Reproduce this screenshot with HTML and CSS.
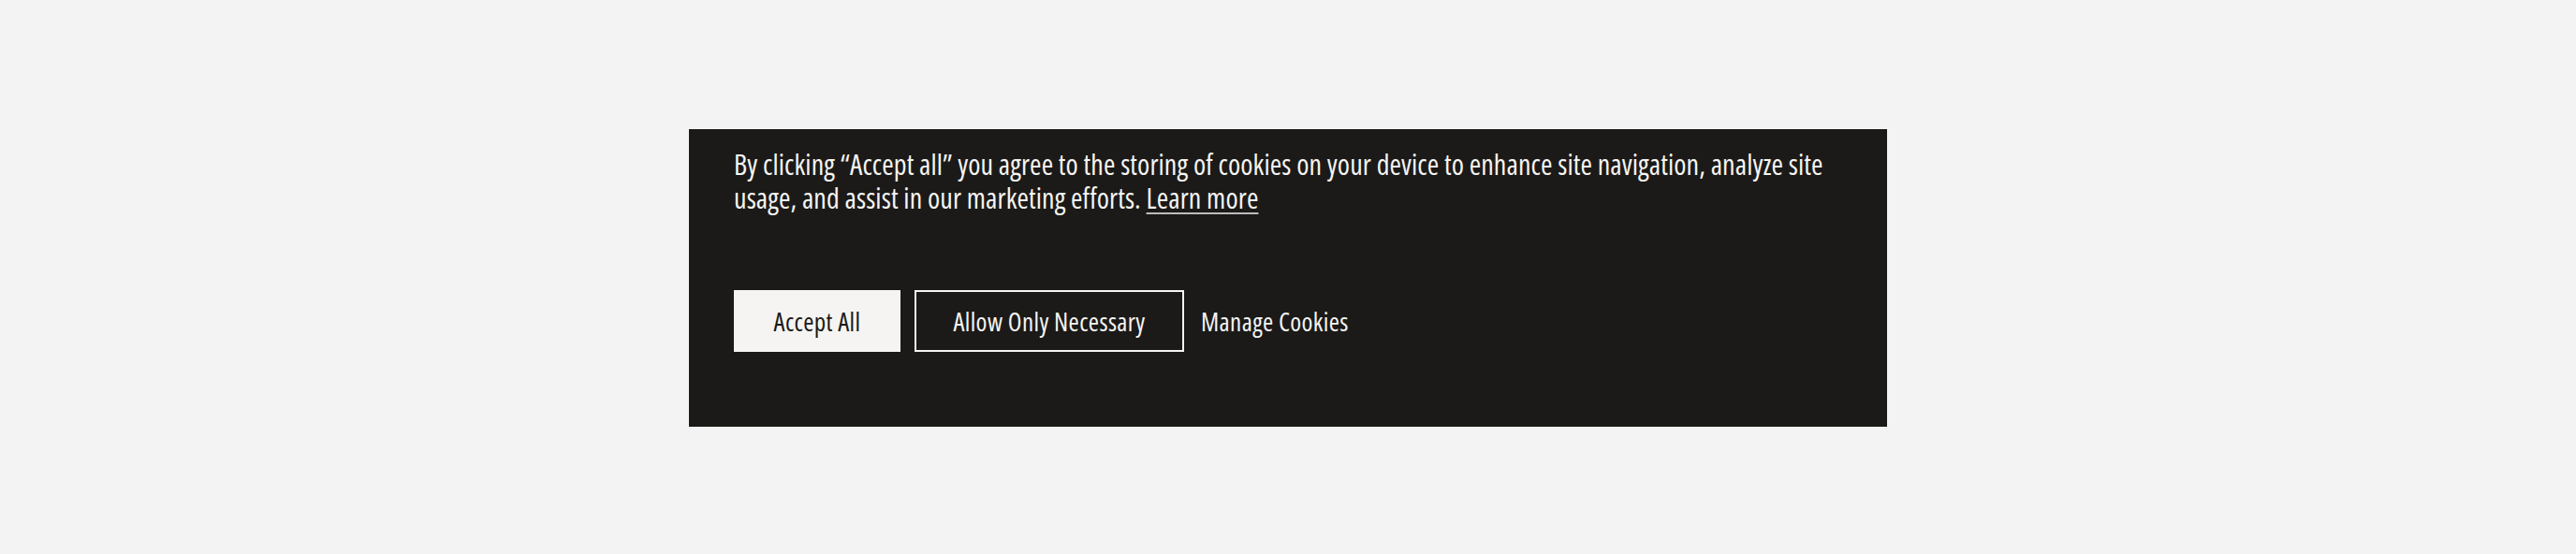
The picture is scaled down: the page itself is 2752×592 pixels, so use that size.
FILE: index.html
```html
<!DOCTYPE html>
<html lang="en">
<head>
<meta charset="utf-8">
<title>Cookie banner</title>
<link rel="stylesheet" href="styles.css">
</head>
<body>
<section class="banner">
  <p class="banner-text">By clicking “Accept all” you agree to the storing of cookies on your device to enhance site navigation, analyze site usage, and assist in our marketing efforts. <a class="learn" href="#">Learn more</a></p>
  <div class="actions">
    <button class="btn btn-primary">Accept All</button>
    <button class="btn btn-outline">Allow Only Necessary</button>
    <button class="btn btn-link">Manage Cookies</button>
  </div>
</section>
</body>
</html>
```
FILE: styles.css
```css
html, body {
  margin: 0;
  padding: 0;
  background: #f3f3f3;
}
body {
  font-family: "Open Sans", "DejaVu Sans Condensed", sans-serif;
  font-stretch: 75%;
  font-weight: 400;
  color: #f5f4f2;
}
.banner {
  box-sizing: border-box;
  width: 1280px;
  margin: 138px auto 0;
  padding: 20px 48px 80px;
  background: #1b1a18;
}
.banner-text {
  margin: 0;
  font-size: 30px;
  line-height: 36px;
  letter-spacing: 0.12px;
  max-width: 1184px;
}
.learn {
  color: #f5f4f2;
  text-decoration: underline;
  text-decoration-color: #bdbcba;
  text-decoration-thickness: 2px;
  text-underline-offset: 4px;
}
.actions {
  display: flex;
  align-items: center;
  gap: 15px;
  margin-top: 80px;
}
.btn {
  box-sizing: border-box;
  height: 66px;
  font-family: inherit;
  font-stretch: 84%;
  font-weight: 400;
  font-size: 27px;
  letter-spacing: 0.4px;
  border: 0;
  padding: 0;
  cursor: pointer;
}
.btn-primary {
  width: 178px;
  background: #f5f4f2;
  color: #1b1a18;
}
.btn-outline {
  width: 288px;
  background: transparent;
  color: #f5f4f2;
  border: 2px solid #f5f4f2;
}
.btn-link {
  background: transparent;
  color: #f5f4f2;
  margin-left: 3px;
}
```
